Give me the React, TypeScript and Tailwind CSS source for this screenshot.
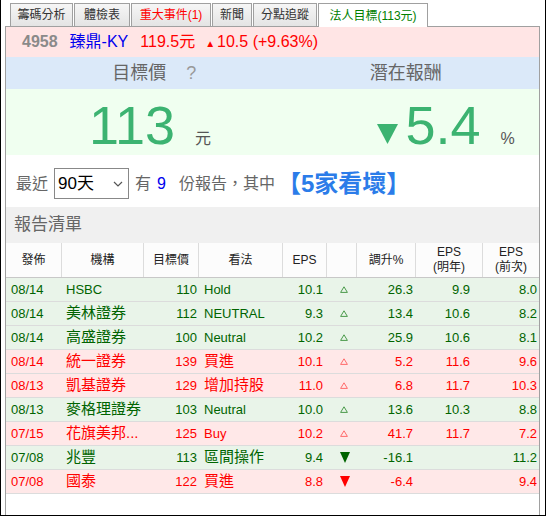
import type { JSX } from 'react';

type Tone = 'up' | 'down';

interface Report {
  date: string;
  broker: string;
  target: string;
  view: string;
  eps: string;
  trend: 'rise' | 'fall';
  change: string;
  epsNext: string;
  epsPrev: string;
  tone: Tone;
}

const REPORTS: Report[] = [
  { date: '08/14', broker: 'HSBC', target: '110', view: 'Hold', eps: '10.1', trend: 'rise', change: '26.3', epsNext: '9.9', epsPrev: '8.0', tone: 'up' },
  { date: '08/14', broker: '美林證券', target: '112', view: 'NEUTRAL', eps: '9.3', trend: 'rise', change: '13.4', epsNext: '10.6', epsPrev: '8.2', tone: 'up' },
  { date: '08/14', broker: '高盛證券', target: '100', view: 'Neutral', eps: '10.2', trend: 'rise', change: '25.9', epsNext: '10.6', epsPrev: '8.1', tone: 'up' },
  { date: '08/14', broker: '統一證券', target: '139', view: '買進', eps: '10.1', trend: 'rise', change: '5.2', epsNext: '11.6', epsPrev: '9.6', tone: 'down' },
  { date: '08/13', broker: '凱基證券', target: '129', view: '增加持股', eps: '11.0', trend: 'rise', change: '6.8', epsNext: '11.7', epsPrev: '10.3', tone: 'down' },
  { date: '08/13', broker: '麥格理證券', target: '103', view: 'Neutral', eps: '10.0', trend: 'rise', change: '13.6', epsNext: '10.3', epsPrev: '8.8', tone: 'up' },
  { date: '07/15', broker: '花旗美邦...', target: '125', view: 'Buy', eps: '10.2', trend: 'rise', change: '41.7', epsNext: '11.7', epsPrev: '7.2', tone: 'down' },
  { date: '07/08', broker: '兆豐', target: '113', view: '區間操作', eps: '9.4', trend: 'fall', change: '-16.1', epsNext: '', epsPrev: '11.2', tone: 'up' },
  { date: '07/08', broker: '國泰', target: '122', view: '買進', eps: '8.8', trend: 'fall', change: '-6.4', epsNext: '', epsPrev: '9.4', tone: 'down' },
];

const TABS = [
  { label: '籌碼分析', width: 'w-[63px]', color: 'text-[#333]' },
  { label: '體檢表', width: 'w-[56px]', color: 'text-[#333]' },
  { label: '重大事件(1)', width: 'w-[80px]', color: 'text-[#ff0000]' },
  { label: '新聞', width: 'w-[40px]', color: 'text-[#333]' },
  { label: '分點追蹤', width: 'w-[64px]', color: 'text-[#333]' },
];

const COLS = 'grid grid-cols-[56px_82px_55px_84px_44px_30px_59px_67px_56px]';

const hasCjk = (s: string) => /[\u4e00-\u9fff]/.test(s);

export default function App(): JSX.Element {
  return (
    <div className="flex h-[516px] w-[546px] flex-col border-b border-l border-r border-black bg-white pl-[4px] pr-[5px] font-['Liberation_Sans','Noto_Sans_CJK_TC',sans-serif]">
      {/* tab strip */}
      <div className="flex h-[26px] items-end gap-px pl-[5px]">
        {TABS.map((t) => (
          <div
            key={t.label}
            className={`flex h-[23px] items-center justify-center border border-b-0 border-[#a0a0a0] bg-linear-to-b from-[#f6f6f6] to-[#e4e4e4] text-[12px] ${t.width} ${t.color}`}
          >
            {t.label}
          </div>
        ))}
        <div className="relative z-10 -mb-px flex h-[24px] w-[110px] items-center justify-center border border-b-0 border-[#a0a0a0] bg-white text-[12px] text-[#008000]">
          法人目標(113元)
        </div>
      </div>

      {/* panel */}
      <div className="flex flex-1 flex-col border border-b-0 border-[#a0a0a0]">
        <div className="flex h-[30px] items-center gap-[12px] bg-[#ffe5e5] pl-[16px] text-[16px]">
          <span className="font-bold text-[#8a8a8a]">4958</span>
          <span className="text-[#0000ee]">臻鼎-KY</span>
          <span className="text-[#ff0000]">119.5元</span>
          <span className="-ml-[2px] text-[#ff0000]">
            <span className="mr-[2px] text-[10px]">▲</span>10.5 (+9.63%)
          </span>
        </div>

        <div className="grid h-[32px] grid-cols-2 bg-[#dbe9f9] text-[18px] text-[#666]">
          <div className="flex items-center justify-center">
            <span className="relative">
              目標價
              <span className="absolute left-full top-0 ml-[20px] text-[#999]">?</span>
            </span>
          </div>
          <div className="flex items-center justify-center">潛在報酬</div>
        </div>

        <div className="grid h-[66px] grid-cols-2 bg-[#f0fff0] text-[#3cb371]">
          <div className="flex items-baseline pl-[83px] pt-[9px]">
            <span className="text-[54px] leading-none">113</span>
            <span className="ml-[20px] text-[16px] text-[#555]">元</span>
          </div>
          <div className="flex items-baseline pl-[104px] pt-[9px]">
            <svg width="21" height="20" viewBox="0 0 21 20" className="mb-[8px]" aria-hidden="true">
              <polygon points="0,0 21,0 10.5,20" fill="#3cb371" />
            </svg>
            <span className="ml-[8px] text-[54px] leading-none">5.4</span>
            <span className="ml-[20px] text-[16px] text-[#555]">%</span>
          </div>
        </div>

        <div className="flex h-[52px] items-start pl-[10px] pt-[13px] text-[16px] text-[#666]">
          <div className="flex h-[31px] items-center">
            <span>最近</span>
            <div className="relative ml-[6px] h-[31px] w-[75px]">
              <select
                defaultValue="90"
                className="h-full w-full appearance-none border border-[#888] bg-white pl-[3px] text-[17px] text-black outline-none"
              >
                <option value="30">30天</option>
                <option value="90">90天</option>
                <option value="180">180天</option>
              </select>
              <svg width="10" height="6" viewBox="0 0 10 6" className="pointer-events-none absolute right-[6px] top-[13px]" aria-hidden="true">
                <path d="M1 1l4 4 4-4" fill="none" stroke="#555" strokeWidth="1.2" />
              </svg>
            </div>
            <span className="ml-[6px]">有</span>
            <span className="ml-[6px] text-[#0000ee]">9</span>
            <span className="ml-[13px]">份報告，其中</span>
            <span className="ml-[2px] text-[24px] font-bold text-[#2b7ce9]">【5家看壞】</span>
          </div>
        </div>

        <div className="flex h-[36px] items-center bg-[#f0f0f0] pl-[8px] text-[17px] text-[#666]">報告清單</div>

        {/* report table */}
        <div className={`${COLS} h-[35px] border-b border-[#c8c8c8] bg-[#fcfcfc] text-[12px] text-[#222]`}>
          {['發佈', '機構', '目標價', '看法', 'EPS', '', '調升%'].map((h, i) => (
            <div key={i} className="flex items-center justify-center border-r border-[#dcdcdc]">{h}</div>
          ))}
          <div className="flex flex-col items-center justify-center border-r border-[#dcdcdc] leading-[15px]">
            <span>EPS</span>
            <span>(明年)</span>
          </div>
          <div className="flex flex-col items-center justify-center leading-[15px]">
            <span>EPS</span>
            <span>(前次)</span>
          </div>
        </div>

        {REPORTS.map((r, i) => (
          <ReportRow key={i} report={r} />
        ))}
      </div>
    </div>
  );
}

function ReportRow({ report: r }: { report: Report }): JSX.Element {
  const tone = r.tone === 'up' ? 'bg-[#e9f4e9] text-[#006400]' : 'bg-[#ffe8e8] text-[#ff0000]';
  const size = (s: string) => (hasCjk(s) ? 'text-[15px]' : 'text-[13px]');
  return (
    <div className={`${COLS} h-[24px] border-b border-[#dcdcdc] text-[13px] ${tone}`}>
      <div className="flex items-center pl-[5px]">{r.date}</div>
      <div className={`flex items-center whitespace-nowrap pl-[4px] ${size(r.broker)}`}>{r.broker}</div>
      <div className="flex items-center justify-end pr-[2px]">{r.target}</div>
      <div className={`flex items-center whitespace-nowrap pl-[5px] ${size(r.view)}`}>{r.view}</div>
      <div className="flex items-center justify-end pr-[4px]">{r.eps}</div>
      <div className="flex items-center justify-center pl-[3px]">
        <TrendMark trend={r.trend} tone={r.tone} />
      </div>
      <div className="flex items-center justify-end pr-[3px]">{r.change}</div>
      <div className="flex items-center justify-end pr-[13px]">{r.epsNext}</div>
      <div className="flex items-center justify-end pr-[2px]">{r.epsPrev}</div>
    </div>
  );
}

function TrendMark({ trend, tone }: { trend: 'rise' | 'fall'; tone: Tone }): JSX.Element {
  if (trend === 'rise') {
    const stroke = tone === 'up' ? '#4a9a4a' : '#ff6b6b';
    return (
      <svg width="8" height="7" viewBox="0 0 8 7" aria-hidden="true">
        <polygon points="4,0.8 7.4,6.4 0.6,6.4" fill="none" stroke={stroke} strokeWidth="1" />
      </svg>
    );
  }
  const fill = tone === 'up' ? '#006400' : '#ff0000';
  return (
    <svg width="10" height="11" viewBox="0 0 10 11" className="ml-[3px]" aria-hidden="true">
      <polygon points="0,0 10,0 5,11" fill={fill} />
    </svg>
  );
}
